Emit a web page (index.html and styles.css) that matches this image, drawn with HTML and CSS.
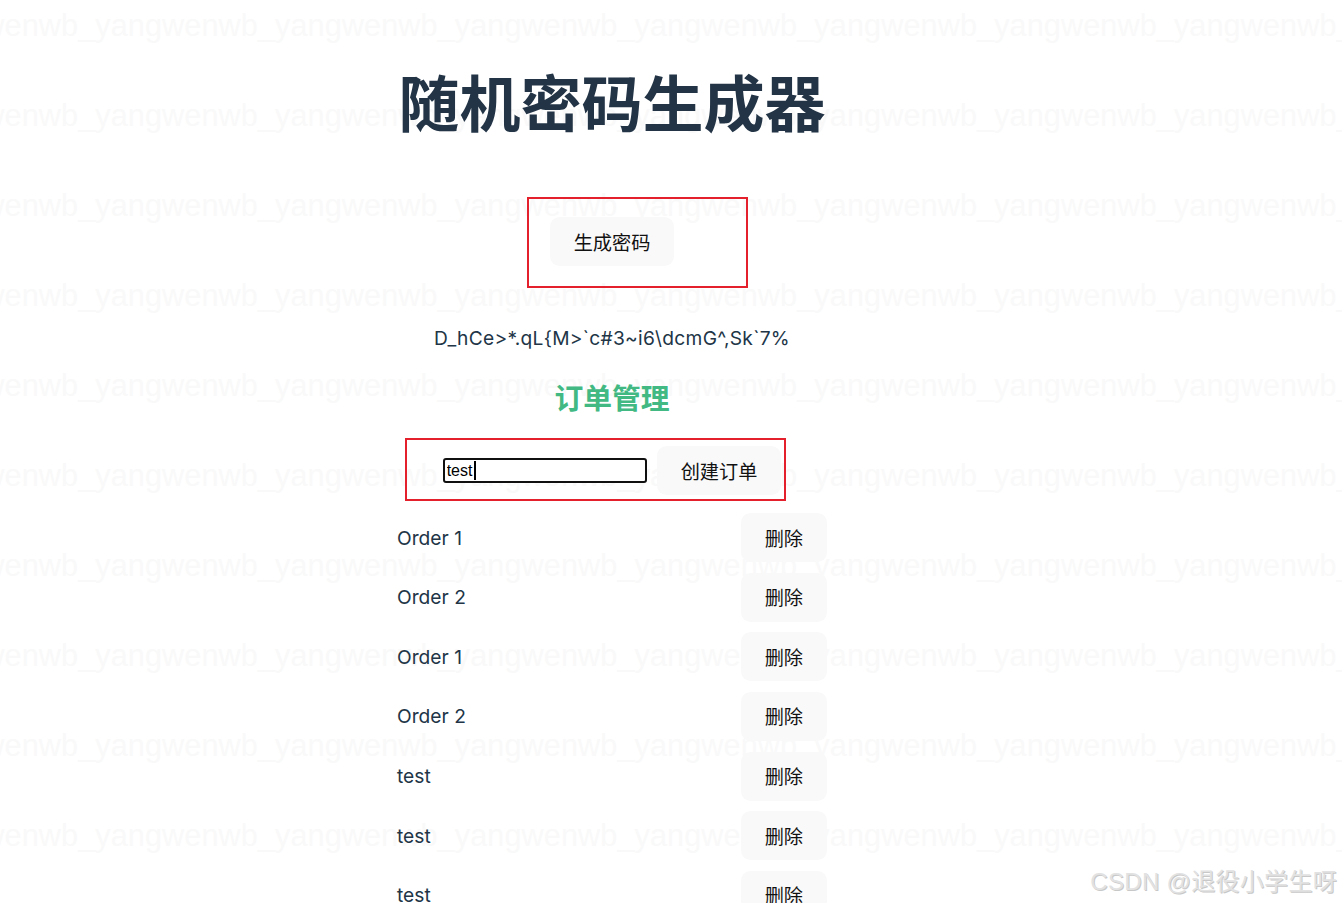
FILE: index.html
```html
<!DOCTYPE html>
<html lang="zh-CN">
<head>
<meta charset="utf-8">
<title>随机密码生成器</title>
<link rel="stylesheet" href="styles.css">
</head>
<body>
<div class="watermark" aria-hidden="true">
  <div class="wm-row">wb_yangwenwb_yangwenwb_yangwenwb_yangwenwb_yangwenwb_yangwenwb_yangwenwb_yangwenwb_yangwen</div>
  <div class="wm-row">wb_yangwenwb_yangwenwb_yangwenwb_yangwenwb_yangwenwb_yangwenwb_yangwenwb_yangwenwb_yangwen</div>
  <div class="wm-row">wb_yangwenwb_yangwenwb_yangwenwb_yangwenwb_yangwenwb_yangwenwb_yangwenwb_yangwenwb_yangwen</div>
  <div class="wm-row">wb_yangwenwb_yangwenwb_yangwenwb_yangwenwb_yangwenwb_yangwenwb_yangwenwb_yangwenwb_yangwen</div>
  <div class="wm-row">wb_yangwenwb_yangwenwb_yangwenwb_yangwenwb_yangwenwb_yangwenwb_yangwenwb_yangwenwb_yangwen</div>
  <div class="wm-row">wb_yangwenwb_yangwenwb_yangwenwb_yangwenwb_yangwenwb_yangwenwb_yangwenwb_yangwenwb_yangwen</div>
  <div class="wm-row">wb_yangwenwb_yangwenwb_yangwenwb_yangwenwb_yangwenwb_yangwenwb_yangwenwb_yangwenwb_yangwen</div>
  <div class="wm-row">wb_yangwenwb_yangwenwb_yangwenwb_yangwenwb_yangwenwb_yangwenwb_yangwenwb_yangwenwb_yangwen</div>
  <div class="wm-row">wb_yangwenwb_yangwenwb_yangwenwb_yangwenwb_yangwenwb_yangwenwb_yangwenwb_yangwenwb_yangwen</div>
  <div class="wm-row">wb_yangwenwb_yangwenwb_yangwenwb_yangwenwb_yangwenwb_yangwenwb_yangwenwb_yangwenwb_yangwen</div>
</div>

<main class="app">
  <h1 class="title">随机密码生成器</h1>
  <div class="gen-wrap">
    <button class="btn">生成密码</button>
  </div>
  <p class="password">D_hCe&gt;*.qL{M&gt;`c#3~i6\dcmG^,Sk`7%</p>
  <h2 class="subtitle">订单管理</h2>
  <div class="create-row">
    <div class="input-wrap">
      <input class="order-input" type="text" value="test">
      <span class="caret"></span>
    </div>
    <button class="btn">创建订单</button>
  </div>
  <ul class="orders">
    <li class="order"><span class="order-name">Order 1</span><button class="btn">删除</button></li>
    <li class="order"><span class="order-name">Order 2</span><button class="btn">删除</button></li>
    <li class="order"><span class="order-name">Order 1</span><button class="btn">删除</button></li>
    <li class="order"><span class="order-name">Order 2</span><button class="btn">删除</button></li>
    <li class="order"><span class="order-name">test</span><button class="btn">删除</button></li>
    <li class="order"><span class="order-name">test</span><button class="btn">删除</button></li>
    <li class="order"><span class="order-name">test</span><button class="btn">删除</button></li>
  </ul>
</main>

<div class="mark mark-gen"></div>
<div class="mark mark-create"></div>
<div class="csdn">CSDN @退役小学生呀</div>
</body>
</html>
```

FILE: styles.css
```css
html, body {
  margin: 0;
  padding: 0;
  background: #ffffff;
}

body {
  height: 903px;
  overflow: hidden;
  position: relative;
  font-family: Inter, "Noto Sans", "Noto Sans CJK SC", sans-serif;
  color: #213547;
}

.watermark {
  position: absolute;
  inset: 0;
  z-index: 0;
  overflow: hidden;
  pointer-events: none;
  padding-top: 6px;
  display: flex;
  flex-direction: column;
}

.wm-row {
  flex: none;
  height: 90px;
  line-height: 40px;
  margin-left: -141px;
  white-space: nowrap;
  overflow: hidden;
  font-family: "Liberation Sans", Arial, sans-serif;
  font-size: 30.8px;
  color: #f9f9f9;
}

.app {
  position: relative;
  z-index: 1;
  width: 430px;
  margin-left: 397px;
  text-align: center;
}

.title {
  margin: 64px 0 0;
  font-family: "Noto Sans CJK SC", sans-serif;
  font-size: 61px;
  line-height: 73px;
  font-weight: 700;
  color: #233446;
  white-space: nowrap;
}

.btn {
  font-family: "Noto Sans CJK SC", sans-serif;
  font-size: 19.2px;
  line-height: 26px;
  font-weight: 400;
  color: #111111;
  background: #f9f9f9;
  border: 1px solid transparent;
  border-radius: 9.6px;
  padding: 10.5px 23px;
  cursor: pointer;
}

.gen-wrap {
  margin-top: 80px;
  display: flex;
  justify-content: center;
}

.password {
  margin: 59px 0 0;
  font-size: 19.2px;
  line-height: 26px;
  letter-spacing: 0.28px;
  color: #213547;
}

.subtitle {
  margin: 28px 0 0;
  font-family: "Noto Sans CJK SC", sans-serif;
  font-size: 28.8px;
  line-height: 35px;
  font-weight: 700;
  color: #42b983;
}

.create-row {
  margin-top: 32px;
  display: flex;
  justify-content: center;
  align-items: center;
  gap: 10px;
}

.input-wrap {
  position: relative;
  display: flex;
}

.order-input {
  box-sizing: border-box;
  width: 204px;
  height: 25px;
  border: 2px solid #101010;
  border-radius: 3px;
  padding: 0 2px;
  font-family: "Liberation Sans", Arial, sans-serif;
  font-size: 16px;
  color: #000;
  background: #fff;
  outline: none;
}

.caret {
  position: absolute;
  left: 31px;
  top: 3px;
  width: 2px;
  height: 19px;
  background: #000;
}

.orders {
  list-style: none;
  margin: 18px 0 0;
  padding: 0;
  display: flex;
  flex-direction: column;
  gap: 10.67px;
  text-align: left;
}

.order {
  display: flex;
  justify-content: space-between;
  align-items: center;
}

.order-name {
  font-size: 19.2px;
  line-height: 26px;
  color: #213547;
}

.mark {
  position: absolute;
  z-index: 2;
  box-sizing: border-box;
  border: 2px solid #e3202b;
}

.mark-gen {
  left: 527px;
  top: 197px;
  width: 221px;
  height: 91px;
}

.mark-create {
  left: 405px;
  top: 438px;
  width: 381px;
  height: 63px;
}

.csdn {
  position: absolute;
  z-index: 3;
  right: 5px;
  bottom: 6px;
  font-family: "Liberation Sans", "Noto Sans CJK SC", sans-serif;
  font-size: 24px;
  line-height: 30px;
  letter-spacing: 0.3px;
  color: #e2e2e2;
  text-shadow: 1px 1px 0 #c8c8c8;
}
```
